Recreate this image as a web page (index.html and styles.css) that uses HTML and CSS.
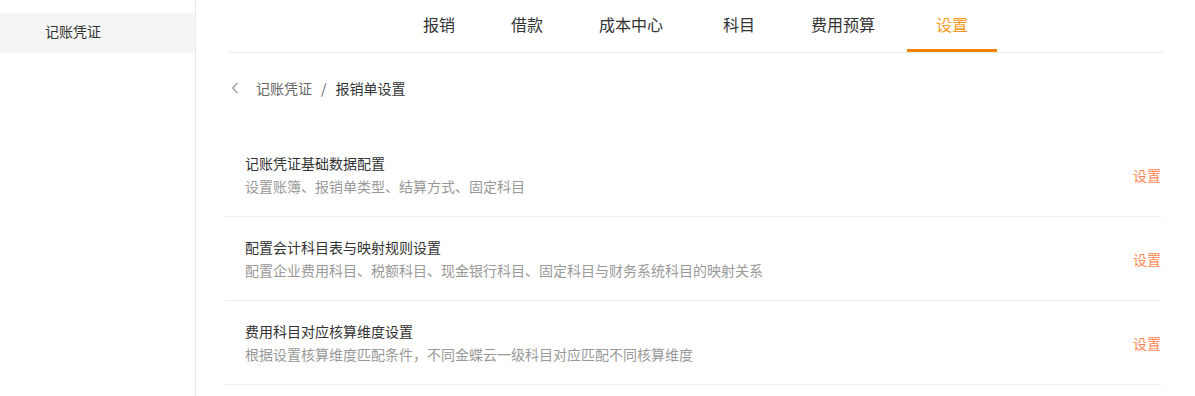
FILE: index.html
```html
<!DOCTYPE html>
<html lang="zh-CN">
<head>
<meta charset="utf-8">
<title>报销单设置</title>
<link rel="stylesheet" href="styles.css">
</head>
<body>
<div class="layout">
  <aside class="sidebar">
    <div class="side-item active">记账凭证</div>
  </aside>
  <main class="main">
    <nav class="tabs">
      <a class="tab">报销</a>
      <a class="tab">借款</a>
      <a class="tab wide">成本中心</a>
      <a class="tab">科目</a>
      <a class="tab wide">费用预算</a>
      <a class="tab active">设置</a>
    </nav>
    <div class="crumbs">
      <svg class="back" width="12" height="14" viewBox="0 0 12 14"><path d="M8.5 2 L3.5 7 L8.5 12" fill="none" stroke="#999" stroke-width="1.2"/></svg>
      <span class="crumb-link">记账凭证</span>
      <span class="sep">/</span>
      <span class="crumb-cur">报销单设置</span>
    </div>
    <ul class="list">
      <li class="row">
        <div class="info">
          <div class="title">记账凭证基础数据配置</div>
          <div class="desc">设置账簿、报销单类型、结算方式、固定科目</div>
        </div>
        <a class="action">设置</a>
      </li>
      <li class="row">
        <div class="info">
          <div class="title">配置会计科目表与映射规则设置</div>
          <div class="desc">配置企业费用科目、税额科目、现金银行科目、固定科目与财务系统科目的映射关系</div>
        </div>
        <a class="action">设置</a>
      </li>
      <li class="row">
        <div class="info">
          <div class="title">费用科目对应核算维度设置</div>
          <div class="desc">根据设置核算维度匹配条件，不同金蝶云一级科目对应匹配不同核算维度</div>
        </div>
        <a class="action">设置</a>
      </li>
    </ul>
  </main>
</div>
</body>
</html>
```

FILE: styles.css
```css
* { box-sizing: border-box; }
html, body {
  margin: 0;
  padding: 0;
  background: #fff;
  font-family: "Noto Sans CJK SC", "Noto Sans", sans-serif;
  font-size: 14px;
  color: #333;
}
.layout {
  display: flex;
  min-height: 396px;
}
.sidebar {
  width: 196px;
  flex: none;
  border-right: 1px solid #e8e8e8;
  padding-top: 13px;
}
.side-item {
  height: 40px;
  line-height: 37px;
  padding-left: 45px;
  font-size: 14px;
  color: #333;
}
.side-item.active { background: #f5f5f5; }
.main {
  flex: 1;
  padding: 0 31px 0 32px;
}
.tabs {
  display: flex;
  justify-content: center;
  height: 53px;
  border-bottom: 1px solid #eeeeee;
}
.tab {
  display: block;
  height: 52px;
  line-height: 48px;
  padding: 0 28px;
  font-size: 16px;
  color: #333;
  border-bottom: 3px solid transparent;
  cursor: pointer;
}
.tab.wide { padding: 0 32px 0 28px; }
.tab.active {
  padding: 0 29px;
  color: #f59a23;
  border-bottom-color: #f08300;
}
.crumbs {
  display: flex;
  align-items: center;
  height: 22px;
  margin-top: 24px;
  font-size: 14px;
}
.back {
  margin-left: 1px;
  margin-right: 15px;
}
.crumb-link { color: #666; }
.sep { color: #666; margin: 0 9px; }
.crumb-cur { color: #333; }
.list {
  list-style: none;
  margin: 34px 3px 0 -3px;
  padding: 0;
}
.row {
  display: flex;
  align-items: center;
  justify-content: space-between;
  padding: 19px 0 19px 20px;
  border-bottom: 1px solid #eeeeee;
}
.title {
  line-height: 22px;
  color: #333;
}
.desc {
  margin-top: 1px;
  line-height: 22px;
  color: #999;
}
.action {
  color: #ff8a55;
  line-height: 22px;
  cursor: pointer;
}
```
